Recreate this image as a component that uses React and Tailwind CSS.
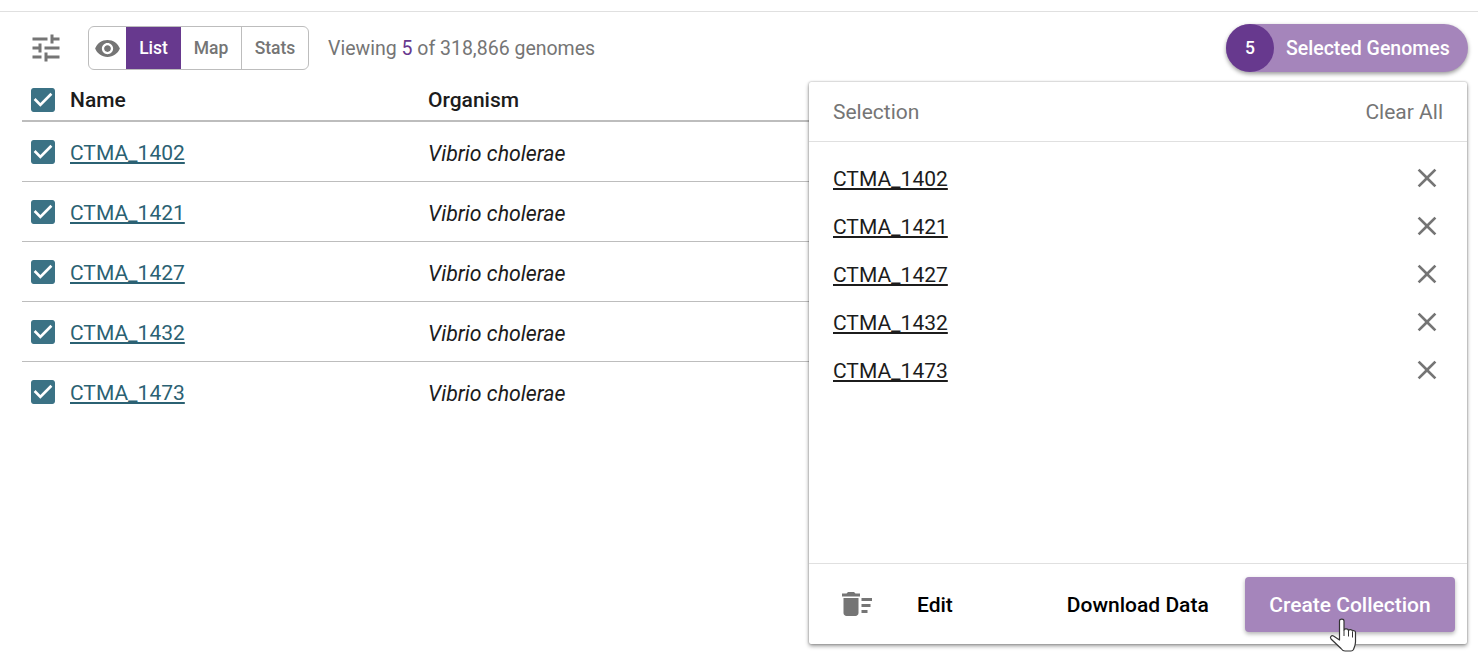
import React from 'react';

const genomes = ['CTMA_1402', 'CTMA_1421', 'CTMA_1427', 'CTMA_1432', 'CTMA_1473'];

const Icon = ({ d, className }) => (
    <svg viewBox="0 0 24 24" fill="currentColor" className={className}>
        <path d={d} />
    </svg>
);

const CHECK = 'M19 3H5c-1.11 0-2 .9-2 2v14c0 1.1.89 2 2 2h14c1.11 0 2-.9 2-2V5c0-1.1-.89-2-2-2zm-9 14l-5-5 1.41-1.41L10 14.17l7.59-7.59L19 8l-9 9z';
const TUNE = 'M3 17v2h6v-2H3zM3 5v2h10V5H3zm10 16v-2h8v-2h-8v-2h-2v6h2zM7 9v2H3v2h4v2h2V9H7zm14 4v-2H11v2h10zm-6-4h2V7h4V5h-4V3h-2v6z';
const EYE = 'M12 4.5C7 4.5 2.73 7.61 1 12c1.73 4.39 6 7.5 11 7.5s9.27-3.11 11-7.5c-1.73-4.39-6-7.5-11-7.5zM12 17c-2.76 0-5-2.24-5-5s2.24-5 5-5 5 2.24 5 5-2.24 5-5 5zm0-8c-1.66 0-3 1.34-3 3s1.34 3 3 3 3-1.34 3-3-1.34-3-3-3z';
const CLOSE = 'M19 6.41L17.59 5 12 10.59 6.41 5 5 6.41 10.59 12 5 17.59 6.41 19 12 13.41 17.59 19 19 17.59 13.41 12z';
const SWEEP = 'M15 16h4v2h-4zm0-8h7v2h-7zm0 4h6v2h-6zM3 18c0 1.1.9 2 2 2h6c1.1 0 2-.9 2-2V8H3v10zM14 5h-3l-1-1H6L5 5H2v2h12z';

// the mouse pointer sits over the button in the screenshot
const HandCursor = () => (
    <svg viewBox="0 0 30 36" className="absolute left-[1328px] top-[617px] w-[30px] h-[36px]">
        <path
            d="M11.500 4c0-2.500 4.500-2.500 4.500 0V13c.5-1.500 4-1.500 4.500.5.5-1.300 3.500-1.300 4 .5.5-.8 3-.5 3 1.500V25c0 3-1 5-2 7.500-.5 1-1.500 1.500-2.500 1.500H17c-2 0-3-1-4-2.500L3 22c-1.500-2 .5-4 2.500-3l6 4z"
            fill="#fff"
            stroke="#333"
            strokeWidth="1.200"
            strokeLinejoin="round"
        />
        <path d="M16 13v6M20.500 13.500v6M24.500 14.500v6" stroke="#333" strokeWidth="1" fill="none" />
    </svg>
);

const App = () => {
    return (
        <div className="relative w-[1478px] h-[663px] overflow-hidden bg-white font-['Roboto',sans-serif] text-[#1c1c1c]">
            <div className="h-[12px] border-b border-[#e0e0e0]" />

            {/* Toolbar */}
            <div className="flex items-center h-[68px] pl-[28px] pr-[10px] pt-[4px]">
                <Icon d={TUNE} className="w-[36px] h-[36px] text-[#757575]" />
                <div className="ml-[24px] flex items-stretch h-[44px] border border-[#bdbdbd] rounded-[6px] overflow-hidden text-[17.5px] font-medium text-[#757575]">
                    <div className="w-[37px] flex items-center justify-center">
                        <Icon d={EYE} className="w-[27px] h-[27px] text-[#757575]" />
                    </div>
                    <div className="w-[55px] flex items-center justify-center bg-[#67398e] text-white">List</div>
                    <div className="w-[61px] flex items-center justify-center border-r border-[#bdbdbd]">Map</div>
                    <div className="w-[66px] flex items-center justify-center">Stats</div>
                </div>
                <p className="ml-[19px] pt-[2px] text-[19.5px] text-[#757575]">
                    Viewing <span className="text-[#67398e]">5</span> of 318,866 genomes
                </p>
                <div className="ml-auto w-[242px] h-[48px] flex items-center rounded-full bg-[#a585bb] shadow-[0_2px_4px_rgba(0,0,0,0.4)] text-white font-medium">
                    <div className="w-[48px] h-[48px] rounded-full bg-[#67398e] flex items-center justify-center text-[17.5px]">5</div>
                    <span className="ml-[12px] pt-[2px] text-[19.5px]">Selected Genomes</span>
                </div>
            </div>

            {/* Table */}
            <div className="ml-[22px] w-[800px]">
                <div className="flex items-center h-[42px] border-b-2 border-[#bdbdbd] text-[21px] font-medium">
                    <Icon d={CHECK} className="ml-[5px] w-[32px] h-[32px] text-[#3b7285]" />
                    <span className="ml-[11px] pt-[2px] w-[358px]">Name</span>
                    <span className="pt-[2px]">Organism</span>
                </div>
                {genomes.map((name, i) => (
                    <div
                        key={name}
                        className={`flex items-center h-[60px] text-[21px] ${i < genomes.length - 1 ? 'border-b border-[#bdbdbd]' : ''}`}
                    >
                        <Icon d={CHECK} className="ml-[5px] w-[32px] h-[32px] text-[#3b7285]" />
                        <div className="ml-[11px] pt-[4px] w-[358px]">
                            <a href="#" className="text-[#2b6173] underline">{name}</a>
                        </div>
                        <span className="pt-[4px] italic text-[21.3px]">Vibrio cholerae</span>
                    </div>
                ))}
            </div>

            {/* Selection panel */}
            <div className="absolute left-[809px] top-[82px] w-[658px] h-[562px] flex flex-col bg-white rounded-[2px] shadow-[0_0_2px_rgba(0,0,0,0.35),0_2px_4px_rgba(0,0,0,0.4)]">
                <div className="h-[60px] flex items-center justify-between px-[24px] pt-[2px] border-b border-[#e0e0e0] text-[21px] text-[#757575]">
                    <span>Selection</span>
                    <span>Clear All</span>
                </div>
                <ul className="flex-1 pt-[13px]">
                    {genomes.map((name) => (
                        <li key={name} className="h-[48px] flex items-center justify-between pl-[24px] pr-[24px] text-[21px]">
                            <a href="#" className="pt-[2px] underline text-[#1c1c1c]">{name}</a>
                            <Icon d={CLOSE} className="w-[32px] h-[32px] text-[#757575] -mt-[2px]" />
                        </li>
                    ))}
                </ul>
                <div className="h-[81px] flex items-center border-t border-[#e0e0e0] pl-[30px] pr-[12px] text-[21px] font-medium text-black">
                    <Icon d={SWEEP} className="w-[36px] h-[36px] text-[#757575]" />
                    <span className="ml-[42px] pt-[4px]">Edit</span>
                    <span className="ml-[114px] pt-[4px]">Download Data</span>
                    <button className="ml-auto w-[210px] h-[55px] pt-[4px] rounded-[4px] bg-[#a585bb] text-white font-medium shadow-[0_2px_4px_rgba(0,0,0,0.3)]">
                        Create Collection
                    </button>
                </div>
            </div>

            <HandCursor />
        </div>
    );
};

export default App;
